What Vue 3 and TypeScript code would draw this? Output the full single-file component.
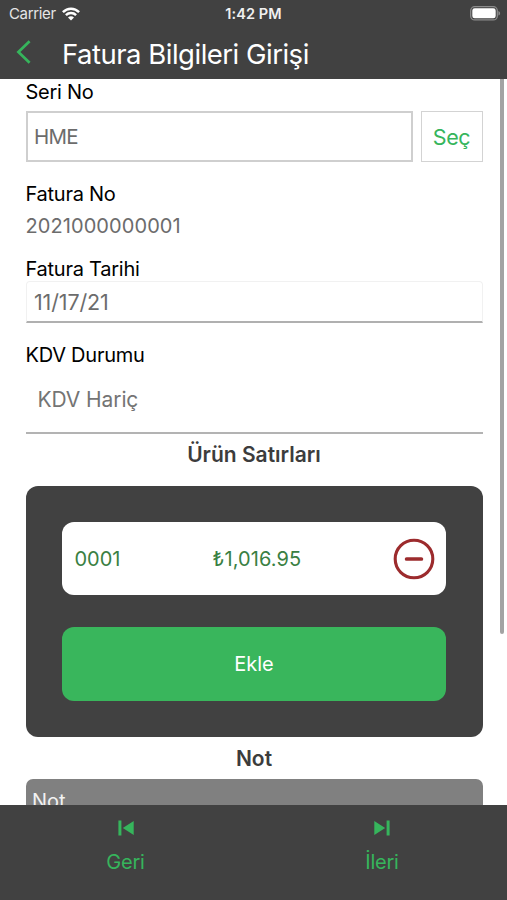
<script setup lang="ts">
import { ref } from 'vue'

interface InvoiceLine {
  code: string
  amount: string
}

const series = ref('HME')
const invoiceNo = '2021000000001'
const invoiceDate = '11/17/21'
const vatState = 'KDV Hariç'
const lines = ref<InvoiceLine[]>([{ code: '0001', amount: '₺1,016.95' }])
</script>

<template>
  <div class="screen">
    <header class="top">
      <div class="status">
        <div class="carrier">
          <span class="carrier-name">Carrier</span>
          <svg class="wifi" width="18" height="14" viewBox="0 0 18 14">
            <g fill="none" stroke="#fff" stroke-width="2.5">
              <path d="M.9 5.1C5.5.5 12.5.5 17.1 5.1" />
              <path d="M3.9 8.2c2.9-2.8 7.3-2.8 10.2 0" />
            </g>
            <path fill="#fff" d="M6 10.4c1.8-1.5 4.2-1.5 6 0L9 13.6z" />
          </svg>
        </div>
        <span class="clock">1:42 PM</span>
        <svg class="battery" width="31" height="15" viewBox="0 0 31 15">
          <rect x=".7" y=".7" width="26.6" height="13.2" rx="4" fill="none" stroke="#8b8b8b" stroke-width="1.3" />
          <rect x="2.3" y="2.3" width="23.4" height="10" rx="2.4" fill="#fff" />
          <path d="M28.4 5c2.3.8 2.3 3.8 0 4.6z" fill="#8b8b8b" />
        </svg>
      </div>
      <div class="nav">
        <svg class="back" width="16" height="26" viewBox="0 0 16 26">
          <path d="M13.6 1.2 2.4 12l11.2 10.8" fill="none" stroke="#36b55c" stroke-width="2.7" />
        </svg>
        <h1 class="title">Fatura Bilgileri Girişi</h1>
      </div>
    </header>

    <main class="content">
      <div class="label">Seri No</div>
      <div class="series-row">
        <div class="series-input">{{ series }}</div>
        <button class="pick">Seç</button>
      </div>

      <div class="label no">Fatura No</div>
      <div class="value">{{ invoiceNo }}</div>

      <div class="label date-label">Fatura Tarihi</div>
      <div class="date">{{ invoiceDate }}</div>

      <div class="label vat-label">KDV Durumu</div>
      <div class="select">{{ vatState }}</div>

      <h2 class="heading">Ürün Satırları</h2>
      <section class="card">
        <div v-for="line in lines" :key="line.code" class="line">
          <span class="code">{{ line.code }}</span>
          <span class="amount">{{ line.amount }}</span>
          <svg class="remove" width="42" height="42" viewBox="0 0 42 42">
            <g fill="none" stroke="#9c2b2d" stroke-linecap="round">
              <circle cx="21" cy="21" r="18.8" stroke-width="3.1" />
              <path d="M13.6 21h14.8" stroke-width="3.7" />
            </g>
          </svg>
        </div>
        <button class="add">Ekle</button>
      </section>

      <h2 class="heading note-heading">Not</h2>
      <div class="note">Not</div>
      <div class="scrollbar"></div>
    </main>

    <footer class="tabs">
      <button class="tab">
        <svg width="16" height="16" viewBox="0 0 16 16" fill="#36b55c">
          <path d="M.4.5h3v15h-3zM15.7.9v14.2L4.8 8z" />
        </svg>
        <span>Geri</span>
      </button>
      <button class="tab">
        <svg width="16" height="16" viewBox="0 0 16 16" fill="#36b55c">
          <path d="M12.6.5h3v15h-3zM.3.9v14.2L11.2 8z" />
        </svg>
        <span>İleri</span>
      </button>
    </footer>
  </div>
</template>

<style>
body {
  margin: 0;
  background: #fff;
}
</style>

<style scoped>
* {
  box-sizing: border-box;
}
.screen {
  width: 507px;
  height: 900px;
  display: flex;
  flex-direction: column;
  overflow: hidden;
  background: #fff;
  font-family: Inter, 'Liberation Sans', sans-serif;
  font-size: 20px;
  color: #000;
}
button {
  margin: 0;
  padding: 0;
  border: 0;
  background: none;
  font: inherit;
}
.top {
  flex: none;
  height: 79px;
  background: #414141;
  color: #fff;
}
.status {
  display: grid;
  grid-template-columns: 1fr auto 1fr;
  align-items: center;
  height: 27px;
  padding: 0 6px 0 9px;
}
.carrier {
  display: flex;
  align-items: center;
  gap: 6px;
}
.carrier-name {
  font-size: 15px;
  letter-spacing: -0.35px;
  color: #e6e6e6;
}
.clock {
  margin-left: -3px;
  font-size: 14.5px;
  font-weight: 600;
  letter-spacing: 0.1px;
  color: #f0f0f0;
}
.battery {
  justify-self: end;
}
.nav {
  display: flex;
  align-items: center;
  height: 52px;
  padding-left: 16px;
}
.title {
  margin: 2px 0 0 30px;
  font-size: 27.5px;
  line-height: 34px;
  font-weight: 400;
  letter-spacing: -0.5px;
  white-space: nowrap;
}
.content {
  position: relative;
  flex: none;
  height: 726px;
  padding: 1px 24.5px 0 25.5px;
  overflow: hidden;
}
.label {
  height: 24px;
  line-height: 24px;
  letter-spacing: -0.25px;
  white-space: nowrap;
}
.series-row {
  display: flex;
  gap: 8px;
  height: 51px;
  margin-top: 7px;
}
.series-input {
  flex: 1;
  padding-left: 6.5px;
  border: 2px solid #cfcfcf;
  font-size: 20.5px;
  line-height: 48px;
  letter-spacing: -0.7px;
  color: #6c6c6c;
}
.pick {
  width: 62px;
  border: 1px solid #d3d3d3;
  font-size: 21.5px;
  letter-spacing: -0.3px;
  color: #36b55c;
}
.no {
  margin-top: 20px;
}
.value {
  height: 24px;
  margin-top: 8px;
  line-height: 24px;
  letter-spacing: 0.08px;
  color: #6c6c6c;
}
.date-label {
  margin-top: 19px;
}
.date {
  height: 42px;
  padding-left: 7.5px;
  border: 1px solid #f1f1f1;
  border-bottom: 2px solid #b0b0b0;
  border-radius: 4px 4px 0 0;
  font-size: 21.5px;
  line-height: 41px;
  letter-spacing: -0.15px;
  color: #6c6c6c;
}
.vat-label {
  margin-top: 20px;
}
.select {
  height: 67px;
  padding-left: 12px;
  border-bottom: 2px solid #b3b3b3;
  font-size: 21px;
  line-height: 65px;
  letter-spacing: -0.1px;
  color: #747474;
}
.heading {
  height: 24px;
  margin: 8px 0 0;
  font-size: 21px;
  line-height: 25px;
  font-weight: 600;
  text-align: center;
  color: #3c3c3c;
}
.card {
  display: flex;
  flex-direction: column;
  gap: 32px;
  height: 251px;
  margin-top: 20px;
  padding: 36px 36.5px;
  border-radius: 12px;
  background: #414141;
}
.line {
  display: grid;
  grid-template-columns: 138px 1fr 42px;
  align-items: center;
  height: 73.4px;
  padding: 0 11.5px 0 12.5px;
  border-radius: 12px;
  background: #fff;
  color: #3a8043;
}
.amount {
  letter-spacing: 0.1px;
}
.add {
  height: 73.4px;
  border-radius: 12px;
  background: #39b65c;
  color: #fff;
}
.note-heading {
  margin-top: 9px;
}
.note {
  height: 80px;
  margin-top: 8.5px;
  padding: 10px 6.5px;
  border-radius: 7px;
  background: #808080;
  line-height: 24px;
  color: #f2f2f2;
}
.scrollbar {
  position: absolute;
  top: 0;
  right: 3.5px;
  width: 4px;
  height: 555px;
  border-radius: 0 0 2px 2px;
  background: #a3a3a3;
}
.tabs {
  flex: none;
  display: grid;
  grid-template-columns: 251px 256px;
  gap: 0;
  height: 95px;
  background: #414141;
}
.tab {
  display: flex;
  flex-direction: column;
  align-items: center;
  justify-content: flex-start;
  gap: 13px;
  padding-top: 15px;
  line-height: 26px;
  letter-spacing: -0.25px;
  color: #36b55c;
}
.tab:last-child {
  padding-left: 6px;
}
</style>
